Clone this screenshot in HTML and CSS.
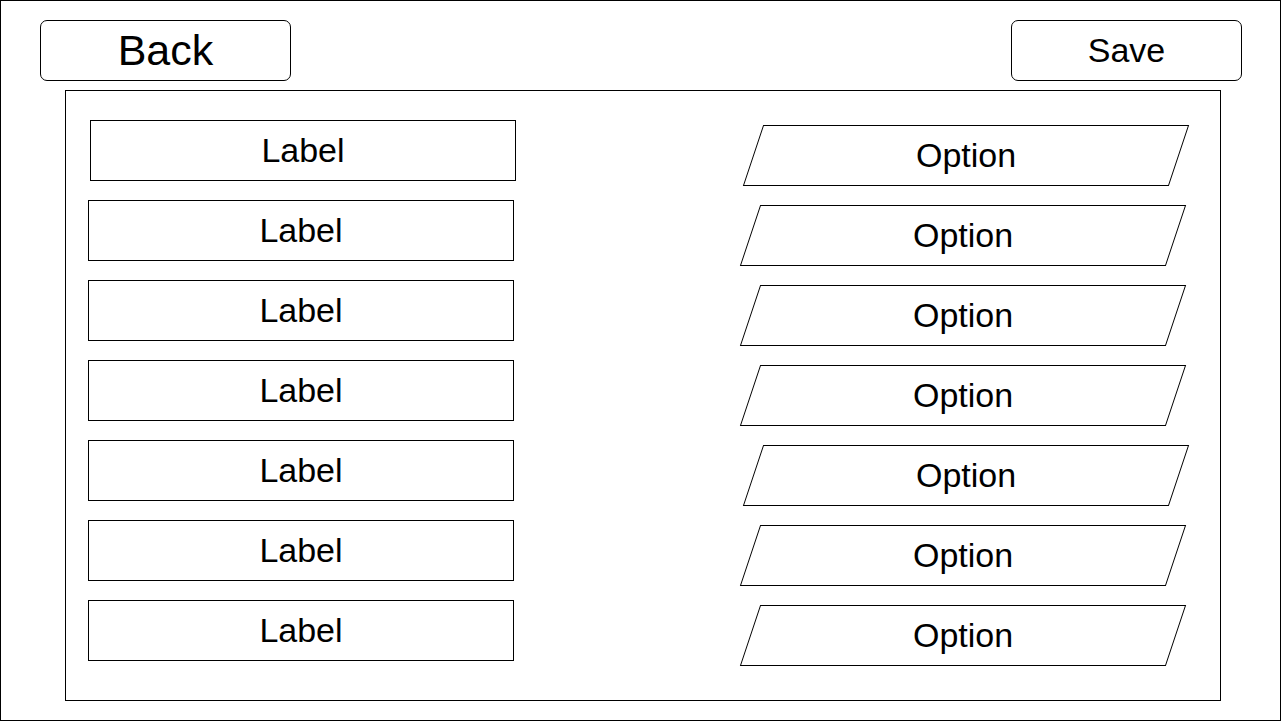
FILE: index.html
```html
<!DOCTYPE html>
<html lang="en">
<head>
    <meta charset="UTF-8">
    <meta name="viewport" content="width=device-width, initial-scale=1.0">
    <title>Options</title>
    <link rel="stylesheet" href="styles.css">
</head>
<body>
    <div class="frame">
        <div class="topbar">
            <button class="btn btn-back">Back</button>
            <button class="btn btn-save">Save</button>
        </div>

        <div class="panel">
            <div class="rows">
                <div class="label nudge-label">Label</div>
                <div class="option nudge-option"><span>Option</span></div>

                <div class="label">Label</div>
                <div class="option"><span>Option</span></div>

                <div class="label">Label</div>
                <div class="option"><span>Option</span></div>

                <div class="label">Label</div>
                <div class="option"><span>Option</span></div>

                <div class="label">Label</div>
                <div class="option nudge-option"><span>Option</span></div>

                <div class="label">Label</div>
                <div class="option"><span>Option</span></div>

                <div class="label">Label</div>
                <div class="option"><span>Option</span></div>
            </div>
        </div>
    </div>
</body>
</html>
```

FILE: styles.css
```css
body {
    margin: 0;
    font-family: "Liberation Sans", Arial, sans-serif;
    color: #000;
    background: #fff;
}
.frame {
    width: 1281px;
    height: 721px;
    border: 1px solid #000;
    box-sizing: border-box;
}
.topbar {
    display: flex;
    justify-content: space-between;
    padding: 19px 38px 0 39px;
}
.btn {
    display: flex;
    align-items: center;
    justify-content: center;
    height: 61px;
    padding: 0;
    background: #fff;
    color: #000;
    border: 1px solid #000;
    border-radius: 7px;
    font-family: "Liberation Sans", Arial, sans-serif;
    box-sizing: border-box;
}
.btn-back {
    width: 251px;
    font-size: 43px;
}
.btn-save {
    width: 231px;
    font-size: 34px;
}
.panel {
    width: 1156px;
    height: 611px;
    margin: 9px 0 0 64px;
    border: 1px solid #000;
    box-sizing: border-box;
    padding: 29px 0 0 22px;
}
.rows {
    display: grid;
    grid-template-columns: 426px 426px;
    grid-auto-rows: 61px;
    column-gap: 236px;
    row-gap: 19px;
}
.label {
    display: flex;
    align-items: center;
    justify-content: center;
    width: 426px;
    height: 61px;
    border: 1px solid #000;
    box-sizing: border-box;
    font-size: 34px;
}
.option {
    display: flex;
    align-items: center;
    justify-content: center;
    align-self: start;
    width: 426px;
    height: 61px;
    margin-top: 5px;
    border: 1px solid #000;
    box-sizing: border-box;
    font-size: 34px;
    transform: skewX(-18.43deg);
}
.option span {
    transform: skewX(18.43deg);
}
.nudge-label {
    margin-left: 2px;
}
.nudge-option {
    margin-left: 3px;
}
```
